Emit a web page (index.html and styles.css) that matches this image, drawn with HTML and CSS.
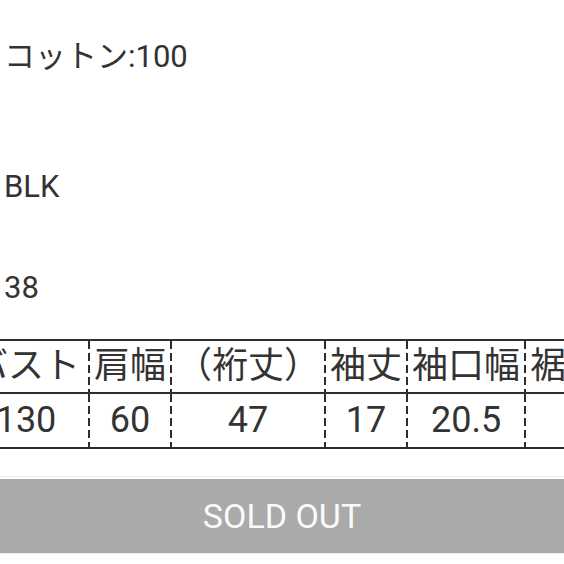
FILE: index.html
```html
<!DOCTYPE html>
<html lang="ja">
<head>
<meta charset="utf-8">
<link rel="stylesheet" href="styles.css">
</head>
<body>
<div class="desc">
  <div class="line l1">コットン:100</div>
  <div class="line l2">BLK</div>
  <div class="line l3">38</div>
</div>
<div class="table-wrap">
  <table class="size">
    <tr class="head">
      <td>バスト</td><td>肩幅</td><td>（裄丈）</td><td>袖丈</td><td>袖口幅</td><td>裾リブ幅</td>
    </tr>
    <tr class="data">
      <td>130</td><td>60</td><td>47</td><td>17</td><td>20.5</td><td>12</td>
    </tr>
  </table>
</div>
<div class="buy">
  <div class="sold">SOLD OUT</div>
</div>
</body>
</html>
```

FILE: styles.css
```css
html, body {
  margin: 0;
  padding: 0;
  overflow: hidden;
  background: #fff;
}
body {
  font-family: Roboto, "Noto Sans CJK JP", sans-serif;
  color: #333;
  width: 564px;
  height: 564px;
}
.desc {
  padding-left: 4px;
}
.line {
  font-size: 31px;
  line-height: 36px;
  white-space: nowrap;
}
.l1 { padding-top: 39px; }
.l2 { margin-top: 94px; }
.l3 { margin-top: 65px; }

.table-wrap {
  margin-top: 33px;
  overflow: hidden;
  width: 564px;
}
.size {
  margin-left: -32px;
  border-collapse: separate;
  border-spacing: 0;
  border-top: 2px solid #2e2e2e;
  font-size: 36px;
  white-space: nowrap;
}
.size td {
  padding: 0 4px 0 6px;
  text-align: center;
  border-bottom: 2px solid #2e2e2e;
  background-image: repeating-linear-gradient(to bottom, #2e2e2e 0 8px, transparent 8px 12px);
  background-size: 2px 100%;
  background-repeat: no-repeat;
  background-position: left top;
}
.size td:first-child {
  background-image: none;
  padding: 0 8px 0 4px;
}
.head td { line-height: 51px; }
.data td { line-height: 53px; }

.buy {
  margin-top: 27px;
  border-top: 1px solid #e8e8e8;
  padding-top: 2px;
}
.sold {
  height: 74px;
  background: #aaa;
  color: #fafafa;
  font-size: 34px;
  display: flex;
  align-items: center;
  justify-content: center;
  border-bottom: 1px solid #eee;
}
```
